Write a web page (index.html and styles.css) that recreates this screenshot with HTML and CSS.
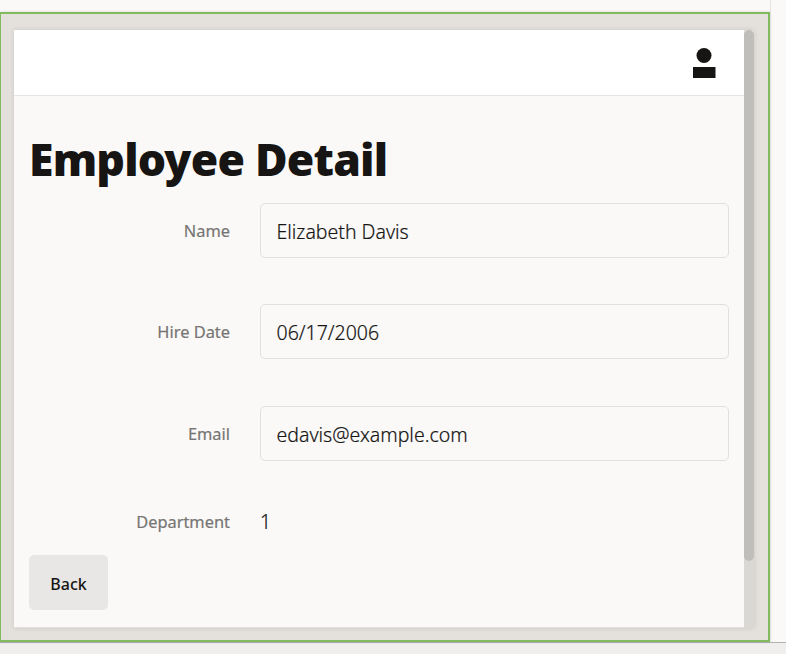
FILE: index.html
```html
<!DOCTYPE html>
<html lang="en">
<head>
<meta charset="utf-8">
<title>Employee Detail</title>
<link rel="stylesheet" href="styles.css">
</head>
<body>
<div class="canvas">
  <div class="frame">
    <div class="device">
      <div class="page">
        <header class="topbar">
          <svg class="avatar" width="23" height="30" viewBox="0 0 23 30" aria-label="User"><circle cx="11" cy="7.5" r="7.5"/><path d="M0 19h22.5v11H0z"/></svg>
        </header>
        <main class="content">
          <h1 class="title">Employee Detail</h1>
          <div class="form">
            <div class="row"><label class="label">Name</label><div class="field">Elizabeth Davis</div></div>
            <div class="row"><label class="label">Hire Date</label><div class="field">06/17/2006</div></div>
            <div class="row"><label class="label">Email</label><div class="field">edavis@example.com</div></div>
          </div>
          <div class="row plain"><label class="label">Department</label><div class="value">1</div></div>
          <button class="back">Back</button>
        </main>
      </div>
      <div class="scrollbar"><div class="thumb"></div></div>
    </div>
  </div>
  <aside class="side"></aside>
</div>
<footer class="status"></footer>
</body>
</html>
```
FILE: styles.css
```css
* { box-sizing: border-box; }
body {
  margin: 0;
  height: 654px;
  overflow: hidden;
  background: #faf9f8;
  color: #161513;
  font-family: "Noto Sans", "Open Sans", sans-serif;
}
.canvas { display: flex; height: 642px; }
.frame {
  width: 770px;
  height: 630px;
  margin-top: 12px;
  border: 2px solid #81bb5f;
  border-left-width: 1px;
  background: #e4e1dd;
  padding: 16px 0 0 13px;
  box-shadow: 0 0 3px rgba(0, 0, 0, .14);
}
.side { flex: 1; border-left: 1px solid #e4e3e2; }
.status { height: 12px; background: #f0efee; border-top: 1px solid #b4b1b3; }
.device {
  display: flex;
  width: 740px;
  height: 598px;
  box-shadow: 0 0 5px rgba(0, 0, 0, .12);
}
.page { width: 730px; background: #faf9f8; border-bottom: 1px solid #e2e0de; }
.topbar {
  display: flex;
  justify-content: flex-end;
  height: 66px;
  padding: 18px 28px 0 0;
  background: #fff;
  border-bottom: 1px solid #e4e4e4;
}
.avatar { fill: #161513; }
.scrollbar { width: 10px; background: #d9d8d4; border-radius: 5px 5px 0 0; }
.thumb { height: 531px; background: #bfbeba; border-radius: 5px; }
.content { padding: 33px 15px 0; }
.title {
  margin: 0 0 14px;
  height: 60px;
  line-height: 60px;
  font-size: 44.5px;
  font-weight: 900;
  letter-spacing: -.8px;
  white-space: nowrap;
}
.form { display: flex; flex-direction: column; gap: 46.4px; }
.row { display: flex; align-items: center; height: 55px; }
.label {
  width: 201px;
  margin-right: 30px;
  padding-top: 1px;
  text-align: right;
  color: #767573;
  font-size: 16.4px;
  line-height: 24px;
  -webkit-text-stroke: .2px #767573;
}
.field {
  width: 469px;
  height: 55px;
  padding: 1px 15.5px 0;
  border: 1px solid #e1e0df;
  border-radius: 5px;
  font-size: 19.5px;
  font-weight: 300;
  line-height: 53px;
  -webkit-text-stroke: .2px #161513;
}
.plain { height: 30px; margin-top: 46.2px; }
.plain .label { padding-top: 0; }
.value {
  padding-bottom: 1px;
  font-size: 19.5px;
  font-weight: 300;
  -webkit-text-stroke: .2px #161513;
}
.back {
  display: block;
  width: 79px;
  height: 55px;
  margin-top: 18px;
  padding: 4px 0 0;
  border: 0;
  border-radius: 5px;
  background: #e8e7e5;
  color: #161513;
  font: 500 16px "Noto Sans", sans-serif;
}
```
